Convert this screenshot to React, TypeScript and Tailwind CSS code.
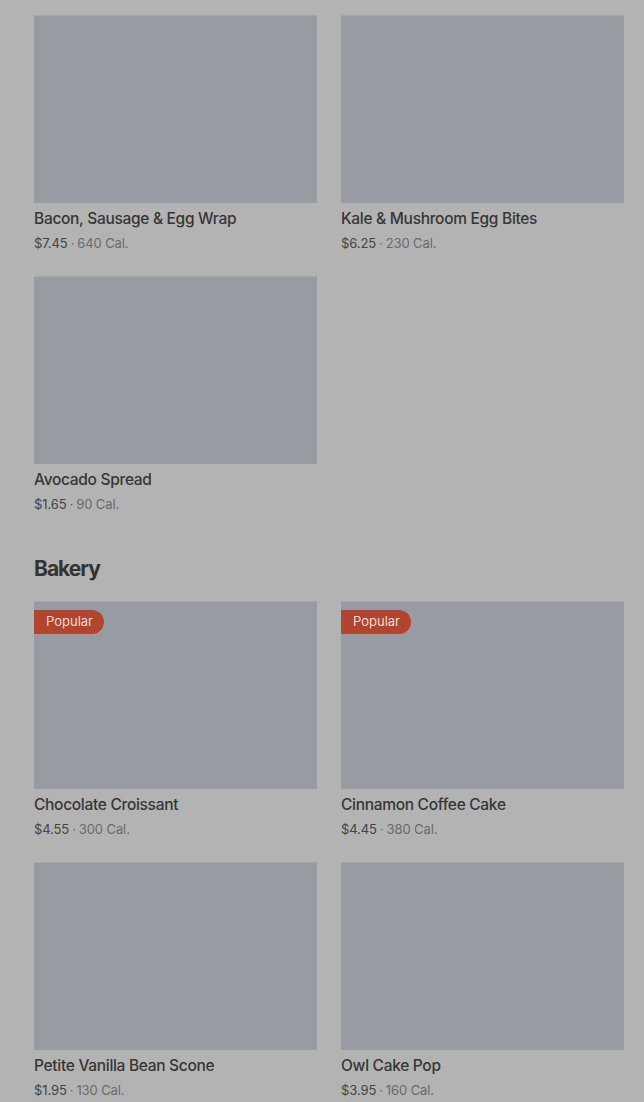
import React from "react";

type Item = {
  name: string;
  price: string;
  cal: string;
  popular?: boolean;
};

const breakfast: Item[] = [
  { name: "Bacon, Sausage & Egg Wrap", price: "$7.45", cal: "640 Cal." },
  { name: "Kale & Mushroom Egg Bites", price: "$6.25", cal: "230 Cal." },
  { name: "Avocado Spread", price: "$1.65", cal: "90 Cal." },
];

const bakery: Item[] = [
  { name: "Chocolate Croissant", price: "$4.55", cal: "300 Cal.", popular: true },
  { name: "Cinnamon Coffee Cake", price: "$4.45", cal: "380 Cal.", popular: true },
  { name: "Petite Vanilla Bean Scone", price: "$1.95", cal: "130 Cal." },
  { name: "Owl Cake Pop", price: "$3.95", cal: "160 Cal." },
];

function MenuCard({ item }: { item: Item }) {
  return (
    <div className="flex flex-col">
      <div className="relative h-[188px] bg-[#999ba2] border-t border-[#a4a6ac]">
        {item.popular && (
          <span className="absolute left-0 top-[8px] h-6 pl-3 pr-[11px] flex items-center rounded-r-full bg-[#b1452f] text-[13px] text-[#f3ddd6]">
            Popular
          </span>
        )}
      </div>
      <div className="mt-[4px] text-[15.5px] leading-6 font-medium text-[#363636] tracking-[-0.3px]">
        {item.name}
      </div>
      <div className="mt-[2px] h-5 text-[13px] leading-5 text-[#6a6a6a] tracking-[-0.1px]">
        <span className="text-[#444444]">{item.price}</span>
        <span className="mx-[3px]">·</span>
        {item.cal}
      </div>
    </div>
  );
}

export default function App() {
  return (
    <div
      className="min-h-[1102px] bg-[#b3b3b3] pt-[15px] pl-[34px] pr-[20px]"
      style={{ fontFamily: "Inter, 'Noto Sans', sans-serif" }}
    >
      <div className="grid grid-cols-2 gap-x-6 gap-y-[23px]">
        {breakfast.map((item) => (
          <MenuCard key={item.name} item={item} />
        ))}
      </div>

      <h2 className="mt-[39px] text-[21px] leading-8 font-bold tracking-[-1px] text-[#333333]">
        Bakery
      </h2>

      <div className="mt-[16px] grid grid-cols-2 gap-x-6 gap-y-[23px]">
        {bakery.map((item) => (
          <MenuCard key={item.name} item={item} />
        ))}
      </div>
    </div>
  );
}
